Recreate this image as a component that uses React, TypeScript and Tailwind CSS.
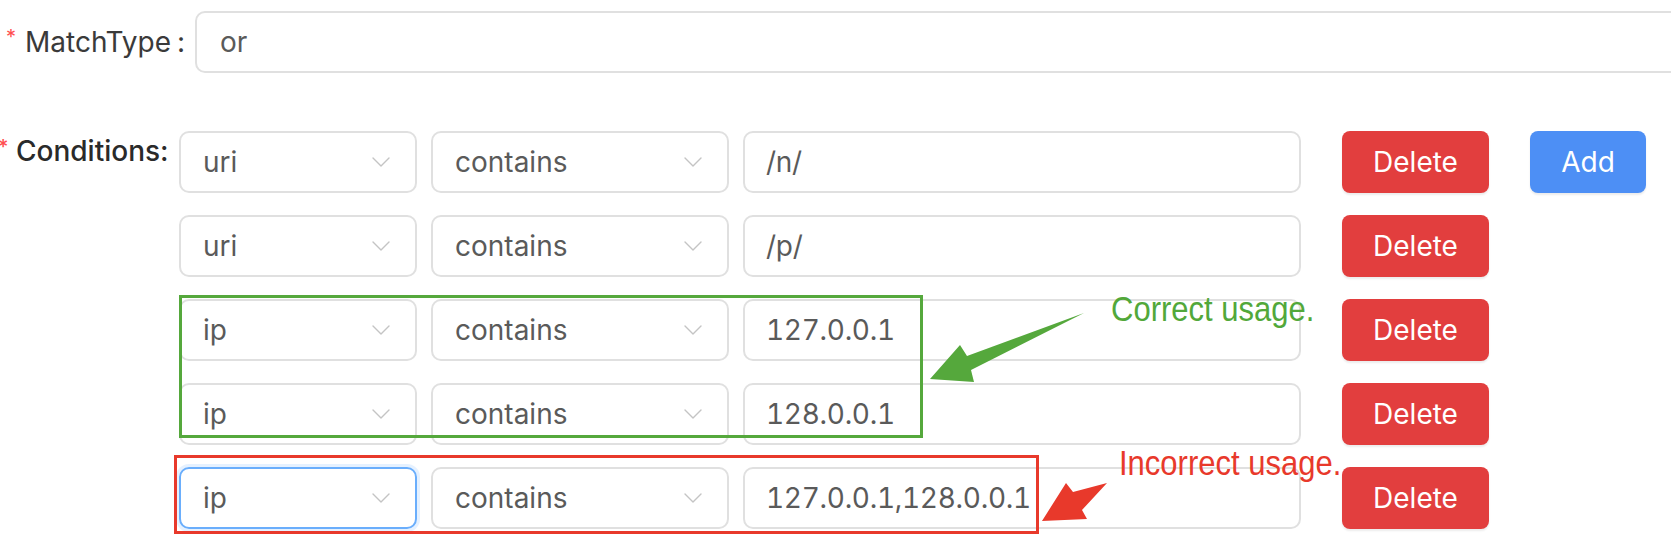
type Row = { field: string; op: string; value: string; focused?: boolean; add?: boolean };

const rows: Row[] = [
  { field: "uri", op: "contains", value: "/n/", add: true },
  { field: "uri", op: "contains", value: "/p/" },
  { field: "ip", op: "contains", value: "127.0.0.1" },
  { field: "ip", op: "contains", value: "128.0.0.1" },
  { field: "ip", op: "contains", value: "127.0.0.1,128.0.0.1", focused: true },
];

const Chevron = () => (
  <svg width="18" height="10" viewBox="0 0 18 10" fill="none" className="shrink-0">
    <path d="M1 1l8 8 8-8" stroke="#c4c4c4" strokeWidth="1.4" strokeLinecap="round" strokeLinejoin="round" />
  </svg>
);

const Select = (props: { value: string; width: string; focused?: boolean }) => {
  const { value, width, focused } = props;
  return (
    <div
      className={
        focused
          ? `${width} flex h-[62px] shrink-0 items-center justify-between rounded-[10px] border-2 border-[#6aaefc] pl-[22px] pr-[25px] shadow-[0_0_0_3px_rgba(80,160,255,0.15)]`
          : `${width} flex h-[62px] shrink-0 items-center justify-between rounded-[10px] border-2 border-[#e0e0e0] pl-[22px] pr-[25px]`
      }
    >
      <span>{value}</span>
      <Chevron />
    </div>
  );
};

const ConditionRow = (props: { row: Row }) => {
  const { row } = props;
  return (
    <div className="flex items-center">
      <Select value={row.field} width="w-[238px]" focused={row.focused} />
      <div className="w-[14px] shrink-0" />
      <Select value={row.op} width="w-[298px]" />
      <div className="w-[14px] shrink-0" />
      <div className="flex h-[62px] w-[558px] shrink-0 items-center rounded-[10px] border-2 border-[#e0e0e0] pl-[21px] tabular-nums tracking-[-0.3px]">
        {row.value}
      </div>
      <button className="ml-[41px] h-[62px] w-[147px] shrink-0 rounded-[8px] bg-[#e23e3e] text-white shadow-[0_2px_2px_rgba(0,0,0,0.08)]">
        Delete
      </button>
      {row.add && (
        <button className="ml-[41px] h-[62px] w-[116px] shrink-0 rounded-[8px] bg-[#4d8ff5] text-white shadow-[0_2px_2px_rgba(0,0,0,0.08)]">
          Add
        </button>
      )}
    </div>
  );
};

export default function App() {
  return (
    <div className="relative h-[552px] w-[1671px] overflow-hidden bg-white font-[Inter,sans-serif] text-[28px] text-[#5a5a5a]">
      <div className="flex items-center pt-[11px]">
        <div className="flex w-[195px] shrink-0 items-center text-[#3a3a3a]">
          <span className="ml-[6px] w-[19px] -translate-y-[5px] text-[20px] text-[#ff4d4f]">*</span>
          <span>MatchType</span>
          <span className="ml-[6px]">:</span>
        </div>
        <div className="flex h-[62px] w-[1500px] shrink-0 items-center rounded-[10px] border-2 border-[#e0e0e0] pl-[23px]">
          or
        </div>
      </div>

      <div className="mt-[58px] flex">
        <div className="flex w-[179px] shrink-0 items-start leading-[40px] font-medium text-[#2a2a2a]">
          <span className="-ml-[2px] w-[18px] -translate-y-[4px] text-[20px] text-[#ff4d4f]">*</span>
          <span>Conditions:</span>
        </div>
        <div className="flex flex-col gap-[22px]">
          {rows.map((row, i) => (
            <ConditionRow key={i} row={row} />
          ))}
        </div>
      </div>

      <svg className="pointer-events-none absolute inset-0" width="1671" height="552" viewBox="0 0 1671 552">
        <rect x="180.5" y="296.5" width="741" height="140" fill="none" stroke="#55a83c" strokeWidth="3" />
        <rect x="175.5" y="456.5" width="862" height="76" fill="none" stroke="#e8392b" strokeWidth="3" />
        <polygon points="1084,313 967,356 960,345 930,379 974,382 971,370" fill="#55a83c" />
        <polygon points="1107,483 1073,492 1066,483 1042,521 1087,519 1082,510" fill="#e8392b" />
      </svg>

      <span className="absolute left-[1111px] top-[292px] origin-top scale-y-[1.12] font-['Liberation_Sans',Arial,sans-serif] text-[31px] leading-none text-[#52a83a]">
        Correct usage.
      </span>
      <span className="absolute left-[1119px] top-[446px] origin-top scale-y-[1.12] font-['Liberation_Sans',Arial,sans-serif] text-[31px] leading-none text-[#e8392b]">
        Incorrect usage.
      </span>
    </div>
  );
}
